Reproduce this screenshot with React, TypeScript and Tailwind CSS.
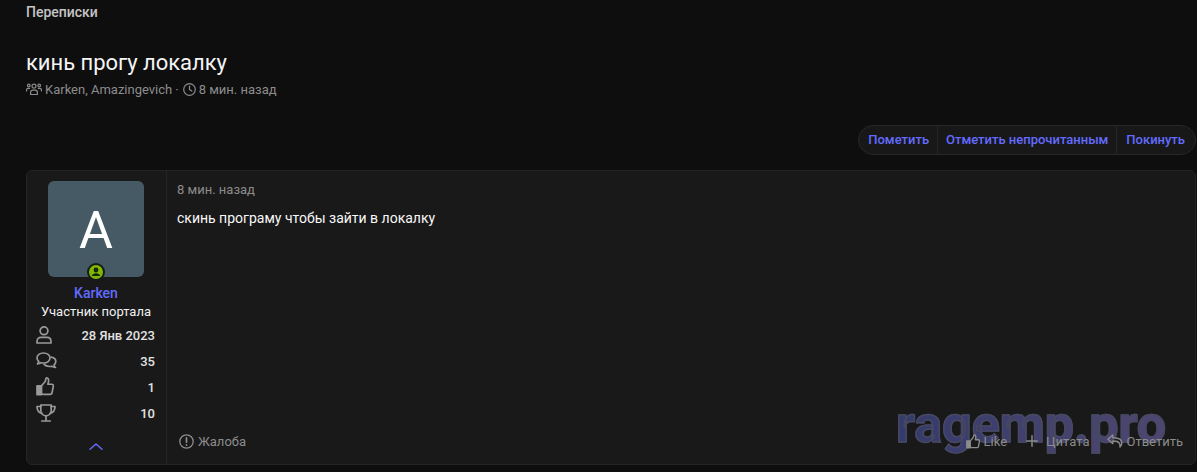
import type { ReactNode } from "react";

const Stroke = ({ w, h, vb, sw = 1.7, children, className }: { w: number; h: number; vb: string; sw?: number; children: ReactNode; className?: string }) => (
  <svg width={w} height={h} viewBox={vb} fill="none" stroke="currentColor" strokeWidth={sw} strokeLinecap="round" strokeLinejoin="round" className={className}>
    {children}
  </svg>
);

const ThumbPath = () => (
  <>
    <path d="M5.500 8.500 9 4.500c.6-1 .8-2 1-3.300.1-.6 1-.8 1.700-.3 1.200.9 1.100 3.300.2 6.100h4c1 0 1.600.8 1.400 1.800l-1.300 7c-.2.900-.9 1.400-1.800 1.400H7.500c-.8 0-1.400-.3-2-.8" />
    <path d="M1 8.500h4.500v8.800H1z" fill="currentColor" />
  </>
);

const UserIcon = () => (
  <Stroke w={16} h={18} vb="0 0 16 18">
    <circle cx="8" cy="4.800" r="3.900" />
    <path d="M1 15.500c0-2.800 1.800-4.200 4-4.200h6c2.200 0 4 1.400 4 4.200v1.500H1z" />
  </Stroke>
);
const CommentsIcon = () => (
  <Stroke w={21} h={18} vb="0 0 21 18">
    <path d="M7.500 1C3.800 1 1 3.200 1 6c0 1.400.7 2.600 1.800 3.500-.2.900-.7 1.700-1.300 2.300 1.400 0 2.600-.4 3.500-1.100.8.200 1.600.3 2.500.3 3.700 0 6.500-2.200 6.500-5S11.200 1 7.500 1z" />
    <path d="M15.300 5.200c2.600.5 4.500 2.300 4.500 4.400 0 1.300-.7 2.500-1.800 3.300.2.900.8 1.900 1.500 2.600-1.500 0-2.900-.5-3.900-1.300-.7.200-1.500.3-2.300.3-2.200 0-4.100-.8-5.200-2.100" />
  </Stroke>
);
const ThumbIcon = () => (
  <Stroke w={18} h={19} vb="0 0 18 18.500"><ThumbPath /></Stroke>
);
const TrophyIcon = () => (
  <Stroke w={20} h={18} vb="0 0 20 18">
    <path d="M4.800 1h10.400v5.500c0 3-2.300 5.300-5.200 5.300S4.800 9.500 4.800 6.500z" />
    <path d="M4.800 2.500H1c0 3.800 1.600 6 5 6.800M15.200 2.500H19c0 3.800-1.600 6-5 6.800" />
    <path d="M10 11.800V16M5.800 17h8.400" />
  </Stroke>
);

const Stat = ({ icon, value }: { icon: ReactNode; value: string }) => (
  <div className="flex h-[26px] items-center justify-between">
    <span className="mb-[3px] flex w-[21px] justify-start text-[#999999]">{icon}</span>
    <span className="mr-px text-[13px] font-medium text-[#e2e2e2]">{value}</span>
  </div>
);

export default function App() {
  return (
    <div className="relative h-[472px] overflow-hidden bg-[#0e0e0f] pr-px pl-[26px] font-['Roboto',sans-serif] text-[13px]">
      <div className="h-[25px] pt-[4px] text-[14px] leading-[17px] font-medium text-[#c4c4c4]">Переписки</div>
      <h1 className="mt-[23px] text-[22px] leading-[30px] font-normal tracking-[-0.03px] text-[#f4f4f4]">кинь прогу локалку</h1>
      <div className="mt-[3px] flex h-[17px] items-center text-[13px] text-[#8c8c8c]">
        <Stroke w={16} h={13} vb="0 0 16 13" sw={1.200} className="mr-[3px]">
          <circle cx="8" cy="3.200" r="2" />
          <circle cx="2.800" cy="2.500" r="1.300" />
          <circle cx="13.200" cy="2.500" r="1.300" />
          <path d="M4.600 11.500V9.300c0-1.300 1-2.200 2.200-2.200h2.400c1.200 0 2.200.9 2.200 2.200v2.200z" />
          <path d="M.6 8V6.800c0-.8.700-1.400 1.400-1.400h1.600M15.400 8V6.800c0-.8-.7-1.400-1.400-1.400h-1.600" />
        </Stroke>
        <span>Karken, Amazingevich</span>
        <span className="mr-[4px] ml-[3px]">·</span>
        <Stroke w={13} h={13} vb="0 0 13 13" sw={1.200} className="mr-[3px]">
          <circle cx="6.500" cy="6.500" r="5.800" />
          <path d="M6.500 3v3.500l2.300 1.600" />
        </Stroke>
        <span>8 мин. назад</span>
      </div>
      <div className="mt-[27px] flex justify-end">
        <div className="flex h-[30px] items-stretch rounded-[15px] border border-[#262626] bg-[#181818] text-[13px] font-medium text-[#636bff]">
          <span className="flex items-center pr-[8px] pl-[9px]">Пометить</span>
          <span className="flex items-center border-l border-[#262626] px-[8px]">Отметить непрочитанным</span>
          <span className="flex items-center border-l border-[#262626] pr-[10px] pl-[9px]">Покинуть</span>
        </div>
      </div>
      <div className="relative mt-[15px] flex h-[295px] rounded-[6px] border border-[#242424] bg-[#191919]">
        <div className="flex w-[140px] flex-col items-center border-r border-[#242424] pt-[10px] pr-[10px] pl-[9px]">
          <div className="relative flex h-[96px] w-[96px] items-center justify-center rounded-[6px] bg-[#455a64] pt-[4px] text-[52px] leading-none text-white">
            A
            <span className="absolute bottom-[-4px] left-[39px] flex h-[18px] w-[18px] items-center justify-center rounded-full border-[2px] border-[#191919] bg-[#7fb800]">
              <svg width="12" height="12" viewBox="0 0 12 12" fill="#17240a">
                <circle cx="6" cy="4" r="2.400" />
                <path d="M1.800 10c.4-2 2.200-2.800 4.200-2.800s3.800.8 4.200 2.800z" />
              </svg>
            </span>
          </div>
          <div className="mt-[8px] text-[14px] leading-[16px] font-medium text-[#636bff]">Karken</div>
          <div className="mt-[2px] text-[13px] leading-[18px] text-[#f0f0f0]">Участник портала</div>
          <div className="mt-[2px] w-full">
            <Stat icon={<UserIcon />} value="28 Янв 2023" />
            <Stat icon={<CommentsIcon />} value="35" />
            <Stat icon={<ThumbIcon />} value="1" />
            <Stat icon={<TrophyIcon />} value="10" />
          </div>
          <Stroke w={14} h={7} vb="0 0 14 7" sw={1.500} className="mt-[16px] text-[#636bff]">
            <path d="M1 6.200 7 1l6 5.200" />
          </Stroke>
        </div>
        <div className="flex flex-1 flex-col pt-[10px] pr-[12px] pb-[13px] pl-[10px]">
          <div className="text-[13px] leading-[18px] text-[#8c8c8c]">8 мин. назад</div>
          <div className="mt-[10px] text-[14px] leading-[18px] text-[#f8f8f8]">скинь програму чтобы зайти в локалку</div>
          <div className="relative z-10 mt-auto flex items-center justify-between text-[13px] text-[#8c8c8c]">
            <span className="ml-[2px] flex items-center gap-[4px]">
              <Stroke w={15} h={15} vb="0 0 15 15" sw={1.300}>
                <circle cx="7.500" cy="7.500" r="6.700" />
                <path d="M7.500 3.800v4.400M7.500 10.800v.3" strokeWidth={1.700} />
              </Stroke>
              Жалоба
            </span>
            <span className="flex items-center">
              <span className="flex items-center gap-[4px]">
                <Stroke w={14} h={15} vb="0 0 18 18.500" sw={1.700}><ThumbPath /></Stroke>
                Like
              </span>
              <span className="ml-[19px] flex items-center gap-[8px]">
                <Stroke w={12} h={12} vb="0 0 12 12" sw={1.500}>
                  <path d="M6 .8v10.400M.8 6h10.400" />
                </Stroke>
                Цитата
              </span>
              <span className="ml-[18px] flex items-center gap-[3px]">
                <Stroke w={16} h={14} vb="0 0 16 14" sw={1.400}>
                  <path d="M5.800 1 .9 5.300l4.900 4.300V7c3-.1 5 .1 6.500 2.100.6.900.9 2 .7 3.900 1.700-2 2.300-4 1.400-6-1-2.300-4-3.200-8.600-3.200z" />
                </Stroke>
                Ответить
              </span>
            </span>
          </div>
        </div>
        <div className="pointer-events-none absolute top-[224px] left-[869px] bg-gradient-to-r from-[#343a6c] to-[#4f4672] bg-clip-text text-[52px] leading-[60px] font-bold text-transparent [-webkit-text-stroke:1.500px_#46495f]">
          ragemp.pro
        </div>
      </div>
    </div>
  );
}
